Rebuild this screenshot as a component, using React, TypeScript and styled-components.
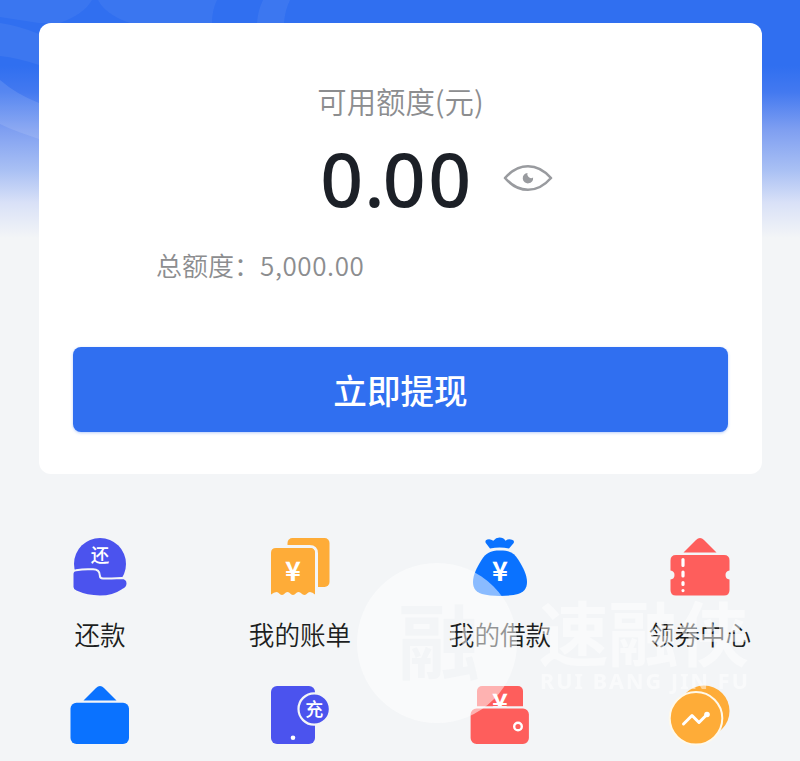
import React from "react";
import styled, { createGlobalStyle } from "styled-components";

const cjk = `"Noto Sans CJK SC", sans-serif`;

const GlobalStyle = createGlobalStyle`
  *, *::before, *::after { box-sizing: border-box; }
  body { margin: 0; background: #f3f5f7; font-family: ${cjk}; }
`;

const Page = styled.main`
  position: relative;
  height: 761px;
  overflow: hidden;
  padding: 23px 38px 0 39px;
  background: linear-gradient(
    180deg,
    #306ff0 0px,
    #306ff0 66px,
    #4379f0 92px,
    #7f9ff1 130px,
    #a9c0f4 170px,
    #d9e1f7 203px,
    #f3f5f7 238px,
    #f3f5f7 100%
  );
`;

const Backdrop = styled.svg`
  position: absolute;
  left: 0;
  top: 0;
`;

const Card = styled.section`
  position: relative;
  height: 451px;
  padding: 55px 34px 0;
  border-radius: 12px;
  background: #fff;
  display: flex;
  flex-direction: column;
`;

const Caption = styled.div`
  height: 44px;
  line-height: 44px;
  text-align: center;
  font-size: 29.4px;
  font-weight: 350;
  color: #8c8d8f;
`;

const AmountRow = styled.div`
  display: grid;
  grid-template-columns: 1fr auto 1fr;
  align-items: center;
  height: 68px;
  margin-top: 22px;
  padding-right: 7px;
`;

const Amount = styled.div`
  grid-column: 2;
  font: 500 75px/68px "Noto Sans", sans-serif;
  letter-spacing: 2.6px;
  color: #1c2027;
`;

const Point = styled.span`
  margin: 0 -4.5px 0 -1.5px;
`;

const EyeIcon = styled.svg`
  margin-left: 29.5px;
`;

const Total = styled.div`
  height: 40px;
  margin: 33px 0 0 83px;
  line-height: 40px;
  font-size: 26px;
  font-weight: 350;
  color: #8c8d8f;
`;

const Figure = styled.span`
  letter-spacing: 0.6px;
`;

const Withdraw = styled.button`
  height: 85px;
  margin-top: 61.5px;
  border: 0;
  border-radius: 8px;
  background: #306ff0;
  box-shadow: 0 1px 3px rgba(48, 111, 240, 0.35);
  color: #fff;
  font: 500 33.6px/85px ${cjk};
  padding: 0;
`;

const Menu = styled.nav`
  display: grid;
  grid-template-columns: repeat(4, 200px);
  grid-auto-rows: 148px;
  margin: 62px -38px 0 -39px;
`;

const MenuItem = styled.a`
  display: flex;
  flex-direction: column;
  align-items: center;
  color: #1c1e21;
`;

const Glyph = styled.svg`
  width: 64px;
  height: 64px;
  flex: none;
`;

const Label = styled.span`
  margin-top: 15px;
  line-height: 38px;
  font-size: 25.6px;
  font-weight: 350;
  white-space: nowrap;
`;

const Brand = styled.svg`
  position: absolute;
  left: 350px;
  top: 555px;
  pointer-events: none;
`;

const SignText = styled.text<{ $weight?: number }>`
  font-family: ${cjk};
  text-anchor: middle;
  font-weight: ${(p) => p.$weight ?? 500};
`;

const RepayIcon = () => (
  <Glyph viewBox="0 0 64 64">
    <circle cx="32" cy="28" r="26" fill="#4b53ee" />
    <path
      d="M8 34.200q6-1 12-1h5q6.500 0 6.800 6 0 3.300 3.200 3.300 8 0 18.500-.5 6 0 6 5.500 0 4.500-5 6.500Q45 60.500 32 60.500T8 55.500Q4.500 54 4.500 51V38q0-3.500 3.500-3.800z"
      fill="#4b53ee"
      stroke="#f3f5f7"
      strokeWidth="2"
    />
    <SignText x="32" y="26" fontSize="18.500" fill="#fff">还</SignText>
  </Glyph>
);

const BillIcon = () => (
  <Glyph viewBox="0 0 64 64">
    <rect x="19.500" y="2" width="42" height="49" rx="5" fill="#feac38" />
    <path d="M3 17q0-6.500 6.500-6.500h32q7 0 7 7V54" fill="none" stroke="#f3f5f7" strokeWidth="3" />
    <path
      d="M3 17q0-5 5-5h34q5 0 5 5v41.500q-2.500-2.500-5-2.500c-2.700 0-3 3-5.500 3s-3.500-3-6-3-3 3-5.500 3-3-3-5.500-3-3 3-5.500 3-3-3-5.500-3q-2.500 0-5.500 2.500z"
      fill="#feac38"
    />
    <SignText x="25" y="45" fontSize="27" fill="#fff" $weight={700}>¥</SignText>
  </Glyph>
);

const LoanIcon = () => (
  <Glyph viewBox="0 0 64 64">
    <path
      d="M22 12.500 17.800 7q-1.300-2.500 1.500-3.500 3-1 6 1.300Q28 1.500 31.500 1.500q4 0 6 3.300 3-2.300 6.500-1 3 1 1.500 3.500L41 12.500q-9-2-19 0z"
      fill="#0a72ff"
    />
    <path
      d="M32 14.500c10 0 14 2.500 18.500 9.500C55 31 59 39 59 46c0 7-3.500 10-9 12-9 2.500-27 2.500-36 0-5.500-2-9-5-9-12 0-7 4-15 8.500-22C18 17 22 14.500 32 14.500z"
      fill="#0a72ff"
    />
    <SignText x="32" y="45" fontSize="27" fill="#fff" $weight={700}>¥</SignText>
  </Glyph>
);

const CouponIcon = () => (
  <Glyph viewBox="0 0 64 64">
    <path d="M15.500 16.500 28 4q4-4 8 0l12.500 12.500z" fill="#fe5e5c" />
    <path
      d="M8 19h48q5.500 0 5.500 5.500v10q-4 .5-4 4.500t4 4.500V54q0 5.500-5.500 5.500H8Q2.500 59.500 2.500 54V43.500q4-.5 4-4.500t-4-4.500v-10Q2.500 19 8 19z"
      fill="#fe5e5c"
    />
    <path d="M15 23.500v6M15 36v4M15 46.500v2M15 54.500v.1" stroke="#fff" strokeWidth="3.200" strokeLinecap="round" />
  </Glyph>
);

const BagIcon = () => (
  <Glyph viewBox="0 0 64 64">
    <path d="M15.500 16.500 28 4q4-4 8 0l12.500 12.500z" fill="#0a72ff" />
    <rect x="2.500" y="18.800" width="58.500" height="41.200" rx="6" fill="#0a72ff" />
  </Glyph>
);

const TopUpIcon = () => (
  <Glyph viewBox="0 0 64 64">
    <rect x="3" y="2" width="44" height="58" rx="6" fill="#4b53ee" />
    <circle cx="25" cy="53.800" r="2.300" fill="#fff" />
    <circle cx="46.200" cy="25" r="15.700" fill="#4b53ee" stroke="#f3f5f7" strokeWidth="2.200" />
    <SignText x="46.200" y="31.500" fontSize="18" fill="#fff">充</SignText>
  </Glyph>
);

const WalletIcon = () => (
  <Glyph viewBox="0 0 64 64">
    <rect x="9" y="2" width="46" height="34" rx="5" fill="#fe5e5c" />
    <SignText x="32" y="28.500" fontSize="27" fill="#fff" $weight={700}>¥</SignText>
    <rect x="1.500" y="23.300" width="60.500" height="37.700" rx="7" fill="#fe5e5c" stroke="#f3f5f7" strokeWidth="2.200" />
    <circle cx="50" cy="42.500" r="3.800" fill="none" stroke="#fff" strokeWidth="2.400" />
  </Glyph>
);

const InvestIcon = () => (
  <Glyph viewBox="0 0 64 64">
    <circle cx="36" cy="27" r="25.500" fill="#feac38" />
    <circle cx="28" cy="34.300" r="26.300" fill="#feac38" stroke="#fff9ea" strokeWidth="2" />
    <path d="m15.500 40 8.500-8.500 7 7 8-8" fill="none" stroke="#fff" strokeWidth="3" strokeLinecap="round" strokeLinejoin="round" />
    <circle cx="39" cy="30.500" r="2.800" fill="#fff" />
  </Glyph>
);

const items: { Icon: React.FC; label?: string }[] = [
  { Icon: RepayIcon, label: "还款" },
  { Icon: BillIcon, label: "我的账单" },
  { Icon: LoanIcon, label: "我的借款" },
  { Icon: CouponIcon, label: "领券中心" },
  { Icon: BagIcon },
  { Icon: TopUpIcon },
  { Icon: WalletIcon },
  { Icon: InvestIcon },
];

export default function App() {
  return (
    <>
      <GlobalStyle />
      <Page>
        <Backdrop width="800" height="240" viewBox="0 0 800 240">
          <g fill="#fff">
            <path d="M0 0H92Q84 14 60 23H39L0 17z" opacity=".05" />
            <path d="M98 0h119q-5 10-5 23h-82Q106 15 98 0z" opacity=".05" />
            <path d="M263 0h27q-5 10-6 23h-27q1-13 6-23z" opacity=".06" />
            <path d="M0 23q20 3 39 11v31Q18 58 0 56z" opacity=".06" />
            <path d="M0 80q16 14 39 23v36Q12 130 0 124z" opacity=".11" />
          </g>
        </Backdrop>
        <Card>
          <Caption>可用额度(元)</Caption>
          <AmountRow>
            <Amount>
              0<Point>.</Point>00
            </Amount>
            <EyeIcon width="50" height="30" viewBox="0 0 50 30">
              <path
                d="M2 15C9 7 16 3.200 25 3.200S41 7 48 15C41 23 34 26.800 25 26.800S9 23 2 15z"
                fill="none"
                stroke="#999b9f"
                strokeWidth="2.600"
                strokeLinejoin="round"
              />
              <path d="M24.500 10a5.200 5.200 0 1 0 5.600 4.500q-2.500 1.500-4.500-.5t-1.100-4z" fill="#999b9f" />
            </EyeIcon>
          </AmountRow>
          <Total>
            总额度：<Figure>5,000.00</Figure>
          </Total>
          <Withdraw>立即提现</Withdraw>
        </Card>
        <Menu>
          {items.map(({ Icon, label }, i) => (
            <MenuItem key={i}>
              <Icon />
              {label && <Label>{label}</Label>}
            </MenuItem>
          ))}
        </Menu>
        <Brand width="420" height="175" viewBox="350 555 420 175">
          <mask id="seal" maskUnits="userSpaceOnUse" x="350" y="555" width="175" height="175">
            <circle cx="437" cy="643" r="80" fill="#fff" />
            <SignText x="439" y="673" fontSize="82" fill="#000" $weight={700}>融</SignText>
          </mask>
          <rect x="350" y="555" width="175" height="175" fill="#fff" opacity=".52" mask="url(#seal)" />
          <g fill="#fff" opacity=".5">
            <SignText x="643.500" y="661" fontSize="70" $weight={700}>速融侠</SignText>
            <text x="540" y="689" fontFamily="Noto Sans, sans-serif" fontWeight="700" fontSize="21.500" textLength="208">
              RUI BANG JIN FU
            </text>
          </g>
        </Brand>
      </Page>
    </>
  );
}
